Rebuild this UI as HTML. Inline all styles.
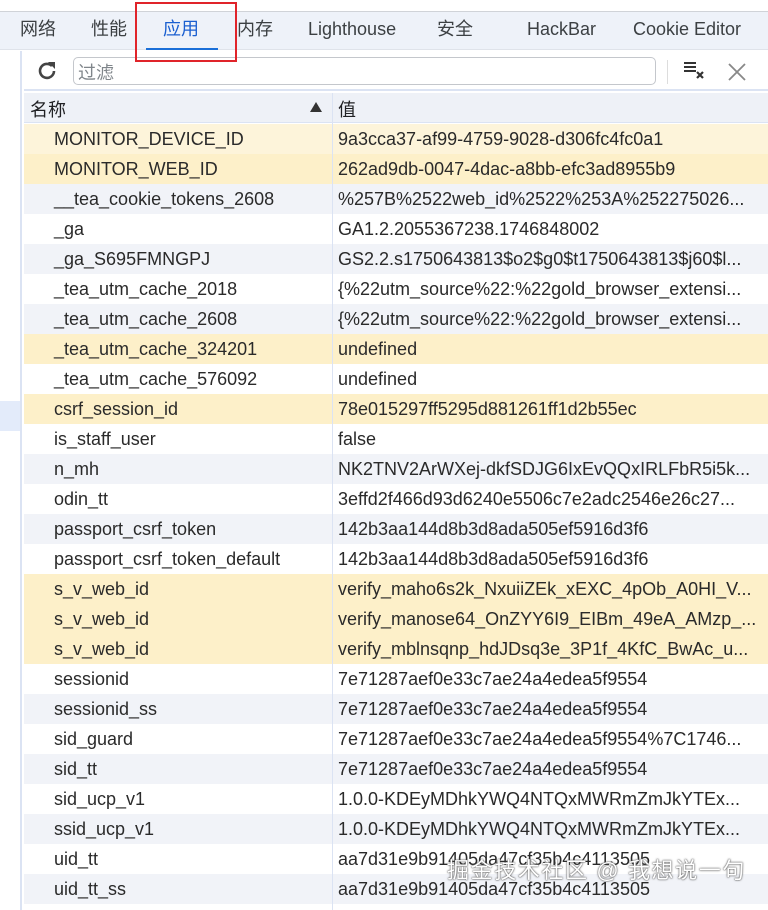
<!DOCTYPE html>
<html><head><meta charset="utf-8"><style>
*{margin:0;padding:0;box-sizing:border-box}
body{width:768px;height:910px;overflow:hidden;background:#fff;font-family:"Liberation Sans","Noto Sans CJK SC",sans-serif;color:#202124;position:relative}
.top{position:absolute;left:0;top:0;width:768px;height:12px;background:#fff;border-bottom:1px solid #d0d3d8;box-shadow:0 1px 2px #ccc}
.tabs{position:absolute;left:0;top:12px;width:768px;height:38px;background:#eef2f9;border-bottom:1px solid #dfe3ea}
.tab{position:absolute;top:5px;font-size:18px;line-height:24px;height:24px;color:#3c4043}
.sel{color:#1a5fd0}
.ul{position:absolute;left:146px;top:36px;width:72px;height:2px;background:#1a6fd8}
.red{position:absolute;left:135px;top:2px;width:102px;height:60px;border:2px solid #e0242a}
.side{position:absolute;left:0;top:51px;width:22px;height:859px;background:#fff;border-right:2px solid #dbe3f3}
.tool{position:absolute;left:24px;top:51px;width:744px;height:40px;background:#fff;border-bottom:2px solid #dbe3f3}
.filter{position:absolute;left:73px;top:57px;width:583px;height:28px;border:1px solid #c4c7cc;border-radius:5px;font-size:18px;color:#80868b;padding:1px 4px}
.hdr{position:absolute;left:24px;top:93px;width:744px;height:30px;background:#eef1f7;border-bottom:1px solid #dbe3f3;font-size:18px}
.row{position:absolute;left:24px;width:744px;height:30px;font-size:18px;line-height:30px;white-space:nowrap;overflow:hidden;color:#2a2a2a}
.n{position:absolute;left:30px}
.v{position:absolute;left:314px}
.div{position:absolute;left:332px;top:93px;width:1px;height:817px;background:#dbe3f3}
.g{background:#f1f3f8}.h{background:#fdf0c9}.h1{background:#fdf4da}
.wm{position:absolute;left:447px;top:856px;font-size:22px;letter-spacing:1.6px;color:#fff;text-shadow:0 0 2px #555,0 0 1px #333;line-height:30px}
</style></head><body>
<div class="top"></div>
<div class="tabs">
<span class="tab" style="left:20px">网络</span>
<span class="tab" style="left:91px">性能</span>
<span class="tab sel" style="left:163px">应用</span>
<span class="tab" style="left:237px">内存</span>
<span class="tab" style="left:308px">Lighthouse</span>
<span class="tab" style="left:437px">安全</span>
<span class="tab" style="left:527px">HackBar</span>
<span class="tab" style="left:633px">Cookie Editor</span>
<div class="ul"></div>
</div>
<div class="side"><div style="position:absolute;top:350px;width:20px;height:30px;background:#e3ebfa"></div></div>
<div class="tool"></div>
<svg style="position:absolute;left:35px;top:59px" width="24" height="24" viewBox="0 0 24 24"><path d="M19 12a7 7 0 1 1-2-5" fill="none" stroke="#444" stroke-width="2.6"/><path d="M13 3h7v7z" fill="#444"/></svg>
<div class="filter">过滤</div>
<div style="position:absolute;left:667px;top:60px;width:1px;height:24px;background:#ddd"></div>
<svg style="position:absolute;left:683px;top:60px" width="24" height="22"><path d="M1 3h12M1 7h12M1 11h12" stroke="#333" stroke-width="2"/><path d="M14 12l6 6M20 12l-6 6" stroke="#333" stroke-width="2.2"/></svg>
<svg style="position:absolute;left:727px;top:62px" width="20" height="20"><path d="M2 2l16 16M18 2L2 18" stroke="#888" stroke-width="1.8"/></svg>
<div class="hdr"><span style="position:absolute;left:6px;top:3px">名称</span><svg style="position:absolute;left:286px;top:9px" width="12" height="10"><path d="M0 10L6 0L12 10z" fill="#333"/></svg><span style="position:absolute;left:314px;top:3px">值</span></div>
<div class="row h1" style="top:124px"><span class="n">MONITOR_DEVICE_ID</span><span class="v">9a3cca37-af99-4759-9028-d306fc4fc0a1</span></div>
<div class="row h" style="top:154px"><span class="n">MONITOR_WEB_ID</span><span class="v">262ad9db-0047-4dac-a8bb-efc3ad8955b9</span></div>
<div class="row g" style="top:184px"><span class="n">__tea_cookie_tokens_2608</span><span class="v">%257B%2522web_id%2522%253A%25227502​6...</span></div>
<div class="row" style="top:214px"><span class="n">_ga</span><span class="v">GA1.2.2055367238.1746848002</span></div>
<div class="row g" style="top:244px"><span class="n">_ga_S695FMNGPJ</span><span class="v">GS2.2.s1750643813$o2$g0$t1750643813$j60$l...</span></div>
<div class="row" style="top:274px"><span class="n">_tea_utm_cache_2018</span><span class="v">{%22utm_source%22:%22gold_browser_extensi...</span></div>
<div class="row g" style="top:304px"><span class="n">_tea_utm_cache_2608</span><span class="v">{%22utm_source%22:%22gold_browser_extensi...</span></div>
<div class="row h" style="top:334px"><span class="n">_tea_utm_cache_324201</span><span class="v">undefined</span></div>
<div class="row" style="top:364px"><span class="n">_tea_utm_cache_576092</span><span class="v">undefined</span></div>
<div class="row h" style="top:394px"><span class="n">csrf_session_id</span><span class="v">78e015297ff5295d881261ff1d2b55ec</span></div>
<div class="row" style="top:424px"><span class="n">is_staff_user</span><span class="v">false</span></div>
<div class="row g" style="top:454px"><span class="n">n_mh</span><span class="v">NK2TNV2ArWXej-dkfSDJG6IxEvQQxIRLFbR5i5k...</span></div>
<div class="row" style="top:484px"><span class="n">odin_tt</span><span class="v">3effd2f466d93d6240e5506c7e2adc2546e26c27...</span></div>
<div class="row g" style="top:514px"><span class="n">passport_csrf_token</span><span class="v">142b3aa144d8b3d8ada505ef5916d3f6</span></div>
<div class="row" style="top:544px"><span class="n">passport_csrf_token_default</span><span class="v">142b3aa144d8b3d8ada505ef5916d3f6</span></div>
<div class="row h" style="top:574px"><span class="n">s_v_web_id</span><span class="v">verify_maho6s2k_NxuiiZEk_xEXC_4pOb_A0HI_V...</span></div>
<div class="row h" style="top:604px"><span class="n">s_v_web_id</span><span class="v">verify_manose64_OnZYY6I9_EIBm_49eA_AMzp_...</span></div>
<div class="row h" style="top:634px"><span class="n">s_v_web_id</span><span class="v">verify_mblnsqnp_hdJDsq3e_3P1f_4KfC_BwAc_u...</span></div>
<div class="row" style="top:664px"><span class="n">sessionid</span><span class="v">7e71287aef0e33c7ae24a4edea5f9554</span></div>
<div class="row g" style="top:694px"><span class="n">sessionid_ss</span><span class="v">7e71287aef0e33c7ae24a4edea5f9554</span></div>
<div class="row" style="top:724px"><span class="n">sid_guard</span><span class="v">7e71287aef0e33c7ae24a4edea5f9554%7C1746...</span></div>
<div class="row g" style="top:754px"><span class="n">sid_tt</span><span class="v">7e71287aef0e33c7ae24a4edea5f9554</span></div>
<div class="row" style="top:784px"><span class="n">sid_ucp_v1</span><span class="v">1.0.0-KDEyMDhkYWQ4NTQxMWRmZmJkYTEx...</span></div>
<div class="row g" style="top:814px"><span class="n">ssid_ucp_v1</span><span class="v">1.0.0-KDEyMDhkYWQ4NTQxMWRmZmJkYTEx...</span></div>
<div class="row" style="top:844px"><span class="n">uid_tt</span><span class="v">aa7d31e9b91405da47cf35b4c4113505</span></div>
<div class="row g" style="top:874px"><span class="n">uid_tt_ss</span><span class="v">aa7d31e9b91405da47cf35b4c4113505</span></div>
<div class="div"></div>
<div class="red"></div>
<div class="wm">掘金技术社区 @ 我想说一句</div>
</body></html>
